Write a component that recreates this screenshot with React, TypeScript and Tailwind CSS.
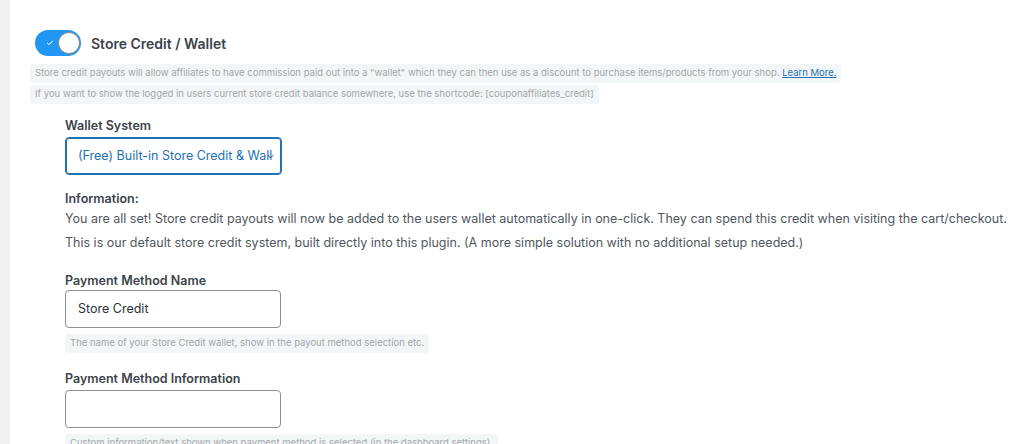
import { ChevronDown, Check } from "lucide-react";

function Note({ children }: { children: React.ReactNode }) {
  return (
    <div className="inline-flex h-[19px] items-center rounded-[4px] bg-[#f2f6f6] px-[5px] text-[9.5px] text-[#a3a7ab]">
      {children}
    </div>
  );
}

function Label({ children }: { children: React.ReactNode }) {
  return <div className="text-[12.5px] font-semibold leading-[16px] text-[#3c434a]">{children}</div>;
}

export default function App() {
  return (
    <div className="flex h-[444px] w-[1024px] overflow-hidden bg-white font-['Inter',sans-serif]">
      <div className="w-[10px] shrink-0 bg-[#f0f0f1]" />
      <div className="flex-1 pl-[20px] pt-[30px]">
        {/* header toggle */}
        <div className="flex items-center pl-[5px]">
          <div className="relative flex h-[26px] w-[46px] items-center rounded-full bg-[#2196f3]">
            <Check size={8} strokeWidth={3} className="ml-[11px] text-white" />
            <div className="absolute right-[1px] top-[2px] h-[22px] w-[22px] rounded-full border border-[#8d8d8d] bg-white" />
          </div>
          <div className="ml-[10px] text-[14px] font-semibold text-[#3c434a]">Store Credit / Wallet</div>
        </div>

        <div className="mt-[8px] flex flex-col items-start gap-[2px]">
          <Note>
            Store credit payouts will allow affiliates to have commission paid out into a "wallet" which they can then use
            as a discount to purchase items/products from your shop.&nbsp;
            <span className="text-[#2271b1] underline">Learn More.</span>
          </Note>
          <Note>
            If you want to show the logged in users current store credit balance somewhere, use the shortcode:
            [couponaffiliates_credit]
          </Note>
        </div>

        <div className="ml-[35px] mt-[14px] flex flex-col items-start">
          <Label>Wallet System</Label>
          <div className="relative mt-[3px] flex h-[38px] w-[217px] items-center rounded-[4px] border border-[#2271b1] pl-[12px] text-[12.5px] text-[#2271b1] shadow-[0_0_0_1px_#2271b1_inset]">
            <span className="w-[194px] overflow-hidden whitespace-nowrap">(Free) Built-in Store Credit &amp; Wallet</span>
            <ChevronDown size={11} strokeWidth={2} className="absolute right-[5px] top-[13px] text-[#3c434a]" />
          </div>

          <div className="mt-[16px]">
            <Label>Information:</Label>
          </div>
          <div className="text-[12.5px] leading-[24px] text-[#50575e]">
            <div>
              You are all set! Store credit payouts will now be added to the users wallet automatically in one-click. They
              can spend this credit when visiting the cart/checkout.
            </div>
            <div>
              This is our default store credit system, built directly into this plugin. (A more simple solution with no
              additional setup needed.)
            </div>
          </div>

          <div className="mt-[18px]">
            <Label>Payment Method Name</Label>
          </div>
          <div className="mt-[1px] flex h-[38px] w-[216px] items-center rounded-[4px] border border-[#8c8f94] px-[12px] text-[12.5px] text-[#2c3338]">
            Store Credit
          </div>
          <div className="mt-[6px] flex">
            <Note>The name of your Store Credit wallet, show in the payout method selection etc.</Note>
          </div>

          <div className="mt-[18px]">
            <Label>Payment Method Information</Label>
          </div>
          <div className="mt-[3px] h-[38px] w-[216px] rounded-[4px] border border-[#8c8f94]" />
          <div className="mt-[6px] flex">
            <Note>Custom information/text shown when payment method is selected (in the dashboard settings).</Note>
          </div>
        </div>
      </div>
    </div>
  );
}
